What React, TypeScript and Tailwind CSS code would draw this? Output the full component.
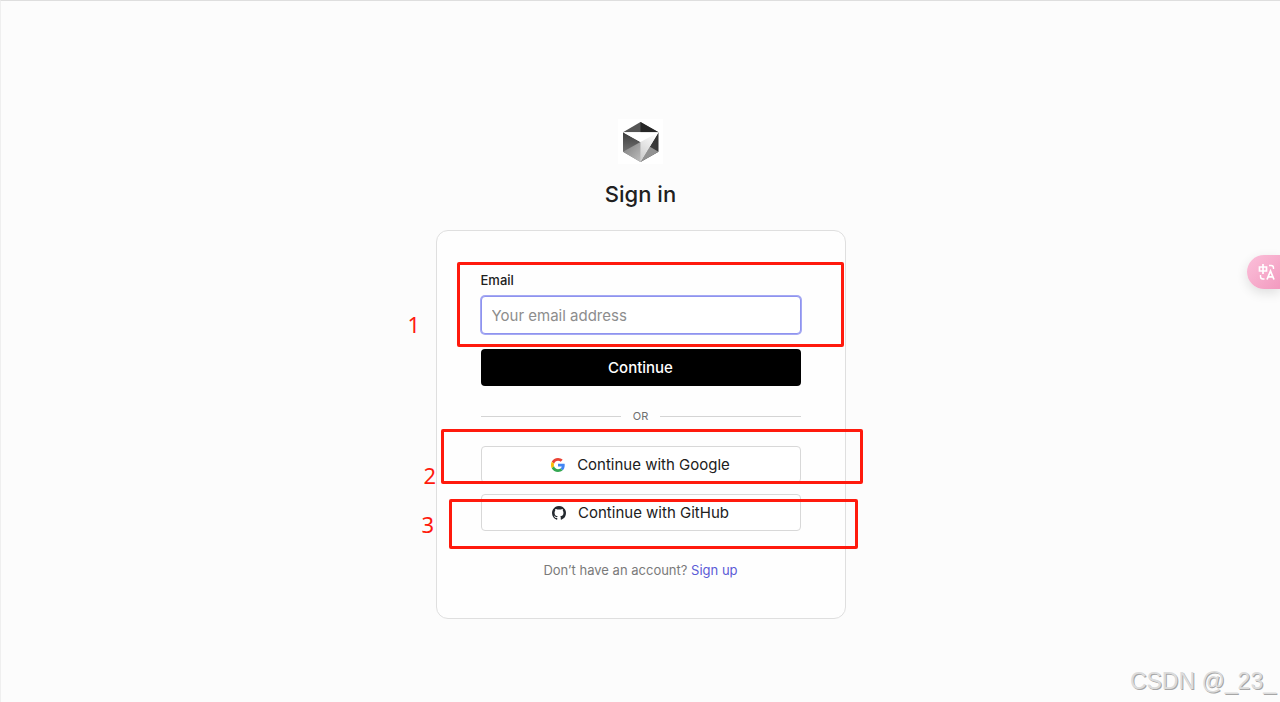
import { useState } from "react";
import { clsx } from "clsx";

interface MarkProps {
  label: string;
  boxClass: string;
  labelClass: string;
}

const MARKS: MarkProps[] = [
  {
    label: "1",
    boxClass: "left-5 top-[31px] h-[85px] w-[387px]",
    labelClass: "-left-[29px] top-[79px]",
  },
  {
    label: "2",
    boxClass: "left-1 top-[198px] h-[55px] w-[422px]",
    labelClass: "-left-[13px] top-[230px]",
  },
  {
    label: "3",
    boxClass: "left-3 top-[268px] h-[50px] w-[409px]",
    labelClass: "-left-[15px] top-[279px]",
  },
];

function CubeLogo() {
  return (
    <svg viewBox="0 0 45 45" className="size-[45px] bg-white" aria-hidden="true">
      <defs>
        <linearGradient id="cube-left" x1="0" y1="0" x2="0" y2="1">
          <stop offset="0" stopColor="#3c3c3c" />
          <stop offset="1" stopColor="#8c8c8c" />
        </linearGradient>
        <linearGradient id="cube-floor" x1="0" y1="0" x2="1" y2="1">
          <stop offset="0" stopColor="#7c7c7c" />
          <stop offset="1" stopColor="#bdbdbd" />
        </linearGradient>
        <linearGradient id="cube-right" x1="1" y1="0" x2="0" y2="1">
          <stop offset="0" stopColor="#2e2e2e" />
          <stop offset="1" stopColor="#4e4e4e" />
        </linearGradient>
        <linearGradient id="cube-face" x1="0.8" y1="0" x2="0.3" y2="1">
          <stop offset="0" stopColor="#ffffff" />
          <stop offset="1" stopColor="#cfcfcf" />
        </linearGradient>
      </defs>
      <path d="M22.5 3 40.5 13.2H5Z" fill="#555555" />
      <path d="M22.5 3 40.5 13.2H22.5Z" fill="#262626" />
      <path d="M5 13.2 22.5 23V43L5 32.8Z" fill="url(#cube-left)" />
      <path d="M5 32.8 22.5 23V43Z" fill="url(#cube-floor)" />
      <path d="M40.5 13.2V32.8L22.5 43Z" fill="url(#cube-right)" />
      <path d="M40.5 32.8 22.5 43 31.5 27.5Z" fill="#929292" />
      <path d="M5 13.2H40.5L22.5 23Z" fill="#ffffff" />
      <path d="M40.5 13.2 22.5 43V23Z" fill="url(#cube-face)" />
    </svg>
  );
}

function GoogleIcon() {
  return (
    <svg viewBox="0 0 48 48" className="size-[14px]" aria-hidden="true">
      <path fill="#EA4335" d="M24 9.5c3.54 0 6.71 1.22 9.21 3.6l6.85-6.85C35.9 2.38 30.47 0 24 0 14.62 0 6.51 5.38 2.56 13.22l7.98 6.19C12.43 13.72 17.74 9.5 24 9.5z" />
      <path fill="#4285F4" d="M46.98 24.55c0-1.57-.15-3.09-.38-4.55H24v9.02h12.94c-.58 2.96-2.26 5.48-4.78 7.18l7.73 6c4.51-4.18 7.09-10.36 7.09-17.65z" />
      <path fill="#FBBC05" d="M10.53 28.59c-.48-1.45-.76-2.99-.76-4.59s.27-3.14.76-4.59l-7.98-6.19C.92 16.46 0 20.12 0 24c0 3.88.92 7.54 2.56 10.78l7.97-6.19z" />
      <path fill="#34A853" d="M24 48c6.48 0 11.93-2.13 15.89-5.81l-7.73-6c-2.15 1.45-4.92 2.3-8.16 2.3-6.26 0-11.57-4.22-13.47-9.91l-7.98 6.19C6.51 42.62 14.62 48 24 48z" />
    </svg>
  );
}

function GitHubIcon() {
  return (
    <svg viewBox="0 0 16 16" className="size-[14px]" fill="#24292f" aria-hidden="true">
      <path d="M8 0C3.58 0 0 3.58 0 8c0 3.54 2.29 6.53 5.47 7.59.4.07.55-.17.55-.38 0-.19-.01-.82-.01-1.49-2.01.37-2.53-.49-2.69-.94-.09-.23-.48-.94-.82-1.13-.28-.15-.68-.52-.01-.53.63-.01 1.08.58 1.23.82.72 1.21 1.87.87 2.33.66.07-.52.28-.87.51-1.07-1.78-.2-3.64-.89-3.64-3.95 0-.87.31-1.59.82-2.15-.08-.2-.36-1.02.08-2.12 0 0 .67-.21 2.2.82.64-.18 1.32-.27 2-.27s1.36.09 2 .27c1.53-1.04 2.2-.82 2.2-.82.44 1.1.16 1.92.08 2.12.51.56.82 1.27.82 2.15 0 3.07-1.87 3.75-3.65 3.95.29.25.54.73.54 1.48 0 1.07-.01 1.93-.01 2.2 0 .21.15.46.55.38A8.01 8.01 0 0 0 16 8c0-4.42-3.58-8-8-8z" />
    </svg>
  );
}

function TranslateIcon() {
  return (
    <svg viewBox="0 0 18 18" className="size-[18px]" fill="none" stroke="white" strokeWidth="1.7" aria-hidden="true">
      <path d="M1.5 4h7v4h-7zM5 1v10" />
      <path d="M11 2.5h2.2Q15.5 2.5 15.5 5v1M2.5 12v1.5Q2.5 16 5 16h1.5" strokeWidth="1.4" />
      <path d="M9 16.5 12.5 8l3.5 8.5M10.3 13.8h4.4" />
    </svg>
  );
}

function Mark({ label, boxClass, labelClass }: MarkProps) {
  return (
    <>
      <div className={clsx("pointer-events-none absolute rounded-xs border-3 border-[#ff1a0d]", boxClass)} />
      <span
        className={clsx(
          "pointer-events-none absolute font-['Noto_Sans','Open_Sans',sans-serif] text-[22px] leading-7 text-[#ff1a0d]",
          labelClass
        )}
      >
        {label}
      </span>
    </>
  );
}

function SocialButton({ icon, children }: { icon: React.ReactNode; children: React.ReactNode }) {
  return (
    <button
      type="button"
      className="flex h-[37px] w-full items-center justify-center gap-3 rounded-sm border border-[#d8d8d8] bg-white text-[15px] leading-5 text-[#202020]"
    >
      {icon}
      {children}
    </button>
  );
}

export default function App() {
  const [email, setEmail] = useState("");

  return (
    <div className="relative flex min-h-screen flex-col items-center overflow-hidden border-t border-l border-t-[#dedede] border-l-[#efefef] bg-[#fcfcfc] pt-[118px] font-[Inter,sans-serif]">
      <CubeLogo />
      <h1 className="mt-[14px] text-[22px] leading-8 font-medium text-[#202020]">Sign in</h1>

      <main className="relative mt-5 w-full max-w-[410px] rounded-xl border border-[#dfdfdf] bg-[#fefefe] px-11 pt-[39px] pb-[38px]">
        <form onSubmit={(e) => e.preventDefault()}>
          <label htmlFor="email" className="block text-[13px] leading-5 font-medium text-[#202020]">
            Email
          </label>
          <input
            id="email"
            type="email"
            value={email}
            onChange={(e) => setEmail(e.target.value)}
            placeholder="Your email address"
            className="mt-1.5 block h-[38px] w-full rounded-sm border border-[#8e93ef] bg-white px-[10px] text-[15px] text-[#202020] ring-1 ring-[#a5a9f3] outline-none placeholder:text-[#8d8d8d]"
          />
          <button
            type="submit"
            className="mt-[15px] block h-[37px] w-full rounded-sm bg-black text-[15px] leading-5 font-medium text-white"
          >
            Continue
          </button>
        </form>

        <div className="my-5 flex items-center gap-3 text-[11px] leading-5 text-[#707070]">
          <div className="h-px flex-1 bg-[#d4d4d4]" />
          OR
          <div className="h-px flex-1 bg-[#d4d4d4]" />
        </div>

        <div className="flex flex-col gap-[11px]">
          <SocialButton icon={<GoogleIcon />}>Continue with Google</SocialButton>
          <SocialButton icon={<GitHubIcon />}>Continue with GitHub</SocialButton>
        </div>

        <p className="mt-[29px] text-center text-[13px] leading-5 text-[#7a7a7a]">
          Don’t have an account?{" "}
          <a href="#signup" className="text-[#5b5bd6]">
            Sign up
          </a>
        </p>

        {MARKS.map((mark) => (
          <Mark key={mark.label} {...mark} />
        ))}
      </main>

      <button
        type="button"
        aria-label="Translate"
        className="absolute top-[254px] right-0 flex h-[34px] w-[33px] items-center rounded-l-full bg-linear-to-br from-[#fbc0da] to-[#f29abf] pl-[11px] shadow-[0_4px_12px_rgba(0,0,0,0.12)]"
      >
        <TranslateIcon />
      </button>

      <span className="absolute right-1 bottom-[5px] font-['Liberation_Sans',sans-serif] text-[23px] leading-8 text-[#dcdcdc] [text-shadow:1px_1px_0_#a6a6a6]">
        CSDN @_23_
      </span>
    </div>
  );
}
